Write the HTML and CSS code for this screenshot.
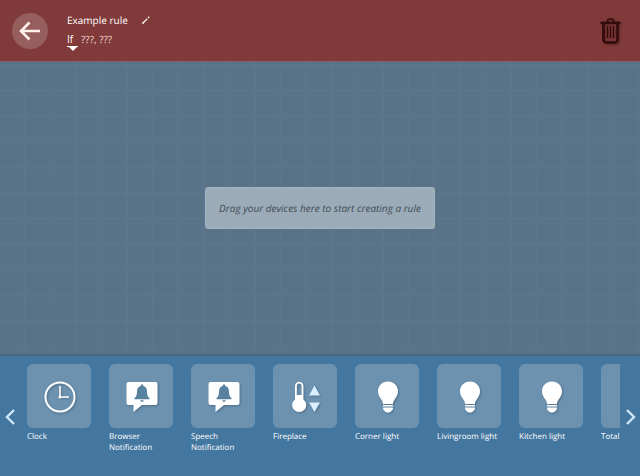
FILE: index.html
```html
<!DOCTYPE html>
<html lang="en">
<head>
<meta charset="utf-8">
<meta name="viewport" content="width=device-width, initial-scale=1">
<title>Example rule</title>
<link rel="stylesheet" href="styles.css">
</head>
<body>
<svg class="defs" aria-hidden="true">
  <symbol id="clock" viewBox="0 0 36 36">
    <circle cx="18" cy="18" r="14.5" fill="none" stroke="currentColor" stroke-width="2"/>
    <path d="M18 7v11h9" fill="none" stroke="currentColor" stroke-width="1.6"/>
    <circle cx="18" cy="18" r="1.5" fill="currentColor"/>
  </symbol>
  <symbol id="notification" viewBox="0 0 36 36">
    <path d="M4.500 3h27a2 2 0 0 1 2 2v19a2 2 0 0 1-2 2H18l-8.500 7v-7h-5a2 2 0 0 1-2-2V5a2 2 0 0 1 2-2z" fill="currentColor"/>
    <path class="bell" d="M18 5.500c.8 0 1.300.5 1.300 1.400 2.700.7 3.700 2.800 3.700 5.600 0 3.500.6 5.300 2.500 6.500v1.300h-15V19c1.900-1.200 2.500-3 2.500-6.500 0-2.800 1-4.900 3.700-5.600 0-.9.500-1.400 1.300-1.400zM16.300 21.200h3.400c-.2 1-.8 1.500-1.700 1.500s-1.500-.5-1.700-1.500z"/>
  </symbol>
  <symbol id="thermometer" viewBox="0 0 36 36">
    <path fill-rule="evenodd" d="M7 7a4.200 4.200 0 0 1 8.400 0v13.500a7 7 0 1 1-8.400 0zM8.800 7v9h4.800V7a2.400 2.400 0 0 0-4.800 0z" fill="currentColor"/>
    <path d="M26.500 6.500l5.500 10h-11zM26.500 33l-5.500-9.500h11z" fill="#d9efff"/>
  </symbol>
  <symbol id="bulb" viewBox="0 0 36 36">
    <path d="M18 2.500c6 0 10 4.400 10 9.900 0 5.900-5.100 8.100-5.100 12.600h-9.800C13.100 20.500 8 18.300 8 12.400c0-5.500 4-9.900 10-9.900zM13.100 26h9.800v1.600h-9.800zM13.100 28.600h9.800v1.900c-1.200.8-1.700 3-4.900 3s-3.700-2.200-4.900-3z" fill="currentColor"/>
  </symbol>
</svg>
<div class="app">
  <header class="header">
    <button class="back" type="button" aria-label="Back">
      <svg viewBox="0 0 36 36" aria-hidden="true"><path d="M28 18H9M17.500 9.500L9 18l8.500 8.500" fill="none" stroke="currentColor" stroke-width="2.600"/></svg>
    </button>
    <div class="rule">
      <div class="title-row">
        <h1 class="title">Example rule</h1>
        <button class="edit" type="button" aria-label="Edit name">
          <svg viewBox="0 0 10 10" aria-hidden="true"><path d="M2 8l4.400-4.400M7.200 2.800l1-1" stroke="currentColor" stroke-width="1.300"/><path d="M1 9l.5-2 1.500 1.500z" fill="currentColor"/></svg>
        </button>
      </div>
      <div class="condition">
        <button class="mode" type="button">If</button>
        <span class="terms">???, ???</span>
      </div>
    </div>
    <button class="trash" type="button" aria-label="Delete rule">
      <svg viewBox="0 0 24 30" aria-hidden="true">
        <path d="M4.500 8v15.500a3 3 0 0 0 3 3h8a3 3 0 0 0 3-3V8" fill="none" stroke="currentColor" stroke-width="2.600"/>
        <path d="M1.500 6.800h20" stroke="currentColor" stroke-width="2.400"/>
        <path d="M8.500 6V4.500a2 2 0 0 1 2-1.500h2a2 2 0 0 1 2 1.500V6" fill="none" stroke="currentColor" stroke-width="1.600"/>
        <path d="M8.500 10v12M11.500 10v12M14.500 10v12" stroke="currentColor" stroke-width="1.300"/>
      </svg>
    </button>
  </header>
  <main class="canvas">
    <p class="hint">Drag your devices here to start creating a rule</p>
  </main>
  <footer class="tray">
    <button class="scroll" type="button" aria-label="Previous devices"><svg viewBox="0 0 12 18" aria-hidden="true"><path d="M10 2L3 9l7 7" fill="none" stroke="currentColor" stroke-width="2.400"/></svg></button>
    <ul class="devices">
      <li class="device"><span class="tile"><svg aria-hidden="true"><use href="#clock"/></svg></span><span class="name">Clock</span></li>
      <li class="device"><span class="tile"><svg aria-hidden="true"><use href="#notification"/></svg></span><span class="name">Browser Notification</span></li>
      <li class="device"><span class="tile"><svg aria-hidden="true"><use href="#notification"/></svg></span><span class="name">Speech Notification</span></li>
      <li class="device"><span class="tile"><svg aria-hidden="true"><use href="#thermometer"/></svg></span><span class="name">Fireplace</span></li>
      <li class="device"><span class="tile"><svg aria-hidden="true"><use href="#bulb"/></svg></span><span class="name">Corner light</span></li>
      <li class="device"><span class="tile"><svg aria-hidden="true"><use href="#bulb"/></svg></span><span class="name">Livingroom light</span></li>
      <li class="device"><span class="tile"><svg aria-hidden="true"><use href="#bulb"/></svg></span><span class="name">Kitchen light</span></li>
      <li class="device"><span class="tile"></span><span class="name">Total</span></li>
    </ul>
    <button class="scroll" type="button" aria-label="Next devices"><svg viewBox="0 0 12 18" aria-hidden="true"><path d="M3 2l7 7-7 7" fill="none" stroke="currentColor" stroke-width="2.400"/></svg></button>
  </footer>
</div>
</body>
</html>
```
FILE: styles.css
```css
* {
  box-sizing: border-box;
}

body {
  margin: 0;
  font-family: "Open Sans", "Noto Sans", sans-serif;
  color: #fff;
  text-rendering: geometricPrecision;
}

button {
  padding: 0;
  border: 0;
  background: none;
  color: inherit;
  font: inherit;
  cursor: pointer;
}

svg {
  display: block;
}

.defs {
  position: absolute;
  width: 0;
  height: 0;
}

.app {
  display: flex;
  flex-direction: column;
  min-height: 100vh;
}

.header {
  display: flex;
  align-items: center;
  padding: 12px 17px 12px 12px;
  background: #803a39;
  border-bottom: 1px solid #8b6064;
}

.back {
  width: 36px;
  height: 36px;
  border-radius: 50%;
  background: #975e5e;
  color: #fff0ee;
}

.rule {
  flex: 1;
  padding: 0 0 2px 19px;
  font-size: 10px;
  line-height: 16px;
}

.title-row {
  display: flex;
  align-items: center;
  gap: 13px;
}

.title {
  margin: 0;
  font-size: 10px;
  font-weight: 400;
}

.edit svg {
  width: 10px;
  height: 10px;
}

.condition {
  display: flex;
  gap: 3px;
  padding-top: 3px;
  color: #f2d9d8;
}

.mode {
  position: relative;
  min-width: 11px;
  height: 16px;
  border-bottom: 1px solid #fff;
  color: #fff;
  text-align: left;
}

.mode::after {
  content: "";
  position: absolute;
  top: 100%;
  left: 1px;
  border: 5px solid transparent;
  border-top-color: #fff;
  border-bottom: 0;
}

.trash {
  color: #330b0c;
}

.trash svg {
  width: 24px;
  height: 30px;
  filter: drop-shadow(1px 1px 1px #592524);
}

.canvas {
  flex: 1;
  display: flex;
  align-items: center;
  justify-content: center;
  background-color: #587287;
  background-image:
    linear-gradient(to right, #5b768c 2px, transparent 2px),
    linear-gradient(#5b768c 2px, transparent 2px);
  background-size: 4vw 4vw;
  background-position: -2px 2px;
}

.hint {
  margin: 0;
  padding: 12px 13px;
  border: 1px solid #a4b5c3;
  border-radius: 3px;
  background: #9babb8;
  color: #414b54;
  font-size: 10px;
  font-style: italic;
  line-height: 16px;
}

.tray {
  display: flex;
  height: 122px;
  border-top: 2px solid #4b657a;
  background: #44779f;
}

.scroll {
  flex: none;
  width: 20px;
  color: #cfe8fa;
}

.scroll svg {
  width: 12px;
  height: 18px;
  margin: 2px auto 0;
}

.devices {
  flex: 1;
  display: flex;
  gap: 18px;
  min-width: 0;
  margin: 0;
  padding: 8px 0 0 7px;
  overflow: hidden;
  list-style: none;
}

.device {
  flex: none;
  width: 64px;
}

.tile {
  display: flex;
  align-items: center;
  justify-content: center;
  height: 64px;
  padding: 2px 0 0 2px;
  border-radius: 6px;
  background: #6c92b0;
}

.tile svg {
  width: 36px;
  height: 36px;
  filter: drop-shadow(1px 1px 1px #4e6e88);
}

.bell {
  fill: #58809f;
}

.name {
  display: block;
  padding-top: 3px;
  font-size: 8px;
  line-height: 11px;
}
```
